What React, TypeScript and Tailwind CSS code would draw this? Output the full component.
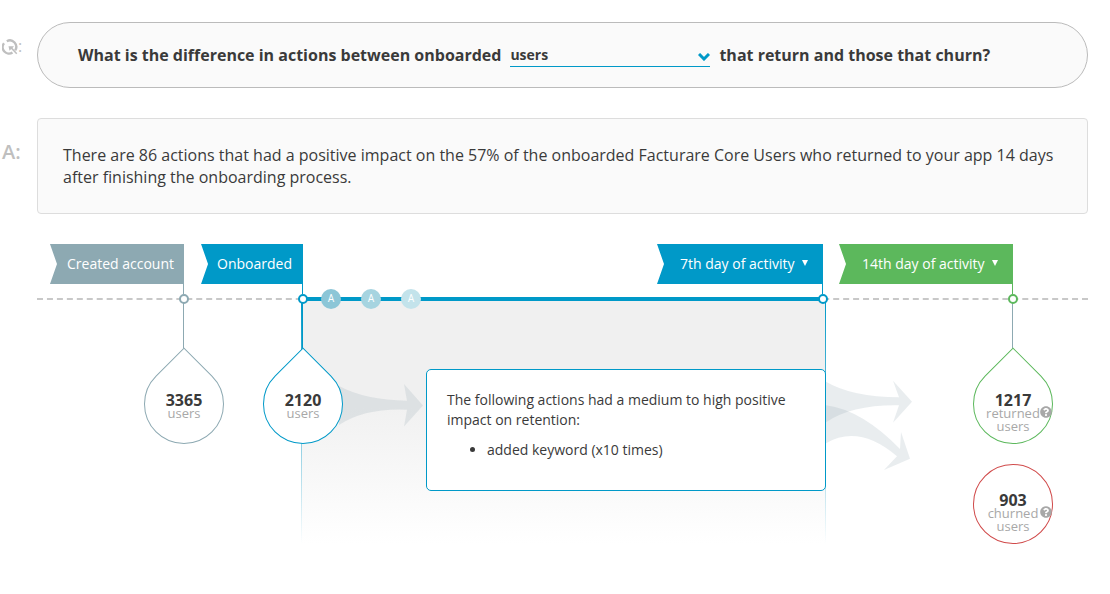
import React from "react";
import { FaQuestionCircle } from "react-icons/fa";

const NOTCH = "[clip-path:polygon(0_0,100%_0,100%_100%,0_100%,7px_50%)]";

interface FlagSelectProps {
  label: string;
  className: string;
}

// Flag with a day picker inside
const FlagSelect: React.FC<FlagSelectProps> = ({ label, className }) => (
  <div className={`relative h-10 text-white ${NOTCH} ${className}`}>
    <select
      aria-label="Day of activity"
      className="h-full w-full appearance-none bg-transparent pl-[23px] text-sm outline-none"
    >
      <option>{label}</option>
    </select>
    <svg viewBox="0 0 6 6" className="pointer-events-none absolute right-[15px] top-4 h-1.5 w-1.5" fill="currentColor">
      <path d="M0 0h6L3 6z" />
    </svg>
  </div>
);

// Short stem under a flag, ending in a ring on the rail
const RailMark: React.FC<{ className: string }> = ({ className }) => (
  <div className={`relative flex h-[30px] justify-end ${className}`}>
    <div className="h-2.5 w-px bg-current" />
    <div className="absolute -right-[5px] top-2.5 z-10 h-2.5 w-2.5 rounded-full border-2 border-current bg-white" />
  </div>
);

interface BubbleProps {
  count: number;
  lines: string[];
  help?: boolean;
  round?: boolean;
  className: string;
}

const Bubble: React.FC<BubbleProps> = ({ count, lines, help = false, round = false, className }) => (
  <div className="relative z-10 h-20 w-20 text-center">
    <div
      className={`absolute inset-0 rotate-45 rounded-full border bg-white ${round ? "" : "rounded-tl-none"} ${className}`}
    />
    <div className="relative pt-[29px]">
      <div className="text-base leading-[14px] font-bold text-[#3a3a3a]">{count}</div>
      {lines.map((line) => (
        <div key={line} className="text-[13px] leading-[13px] text-[#a8a8a8]">
          {line}
        </div>
      ))}
    </div>
    {help && <FaQuestionCircle className="absolute top-[42px] right-px h-3 w-3 text-[#a8a8a8]" />}
  </div>
);

const Stem: React.FC<{ className: string }> = ({ className }) => (
  <div className={`absolute right-0 top-0 h-12 w-px ${className}`} />
);

const ACTIONS = [
  { id: 1, color: "bg-[#8cc6d7]" },
  { id: 2, color: "bg-[#a6d4e0]" },
  { id: 3, color: "bg-[#c3e3eb]" },
];

const App: React.FC = () => {
  return (
    <main className="min-h-screen bg-white pt-[22px] pr-[22px] font-['Open_Sans','Noto_Sans',sans-serif] text-[#3a3a3a]">
      <section className="flex">
        <div className="flex w-[37px] shrink-0 items-start pt-4 pl-0.5 text-[#bfbfbf]">
          <svg viewBox="0 0 16 16" className="mt-px h-4 w-4" fill="none" stroke="currentColor" strokeWidth="2.4">
            <path d="M2 4.300A6.400 6.400 0 0 0 10.500 13.600M4.800 2.200A6.400 6.400 0 0 1 13.200 11.300" />
            <path d="M6.500 7.200h5.500l-1.500 1.700 4.800 5.400-1.100 1-5-5.200-1.700 1.700z" fill="currentColor" stroke="none" />
          </svg>
          <span className="text-base leading-4">:</span>
        </div>
        <div className="flex min-h-[66px] flex-1 items-center gap-[9px] rounded-[33px] border border-[#bbb] bg-[#fafafa] px-10 font-bold">
          <label htmlFor="segment">What is the difference in actions between onboarded</label>
          <div className="relative w-[200px] border-b border-[#0099c8]">
            <select
              id="segment"
              className="block h-[23px] w-full appearance-none bg-transparent text-sm font-bold outline-none"
            >
              <option>users</option>
            </select>
            <svg
              viewBox="0 0 12 8"
              className="pointer-events-none absolute right-0 top-2.5 h-2 w-3"
              fill="none"
              stroke="#0099c8"
              strokeWidth="3"
            >
              <path d="M1 1l5 5 5-5" />
            </svg>
          </div>
          <span>that return and those that churn?</span>
        </div>
      </section>

      <section className="mt-[30px] flex">
        <div className="w-[37px] shrink-0 pt-[22px] pl-0.5 text-xl leading-6 font-semibold text-[#bfbfbf]">A:</div>
        <p className="min-h-24 flex-1 rounded border border-[#ddd] bg-[#fafafa] p-[25px] text-base leading-[22px]">
          There are 86 actions that had a positive impact on the 57% of the onboarded Facturare Core Users who returned
          to your app 14 days after finishing the onboarding process.
        </p>
      </section>

      <section className="relative mt-[30px] ml-[37px] grid grid-cols-[147px_119px_1fr_190px_75px]">
        {/* flags */}
        <div className="flex justify-end">
          <div className={`h-10 bg-[#8da9b2] pr-2.5 pl-[17px] text-sm leading-10 text-white ${NOTCH}`}>
            Created account
          </div>
        </div>
        <div className="flex justify-end">
          <div className={`h-10 bg-[#0099c8] pr-[11px] pl-4 text-sm leading-10 text-white ${NOTCH}`}>Onboarded</div>
        </div>
        <div className="flex justify-end">
          <FlagSelect label="7th day of activity" className="w-[166px] bg-[#0099c8]" />
        </div>
        <div className="flex justify-end">
          <FlagSelect label="14th day of activity" className="w-[174px] bg-[#5cb85c]" />
        </div>
        <div />

        {/* rail */}
        <div className="absolute inset-x-0 top-[54px] border-t-2 border-dashed border-[#c8c8c8]" />
        <RailMark className="text-[#8da9b2]" />
        <RailMark className="text-[#0099c8]" />
        <div className="relative">
          <div className="absolute inset-x-0 top-[13px] z-[1] h-1 bg-[#0099c8]" />
          <div className="absolute top-[5px] left-[18px] z-10 flex gap-5">
            {ACTIONS.map((action) => (
              <span
                key={action.id}
                className={`h-5 w-5 rounded-full text-center font-[Roboto,sans-serif] text-[10px] leading-5 text-white ${action.color}`}
              >
                A
              </span>
            ))}
          </div>
          <RailMark className="text-[#0099c8]" />
        </div>
        <RailMark className="text-[#5cb85c]" />
        <div />

        {/* funnel */}
        <div className="relative -mt-3.5 flex justify-end pt-16">
          <Stem className="bg-[#8da9b2]" />
          <div className="-mr-10">
            <Bubble count={3365} lines={["users"]} className="border-[#8da9b2]" />
          </div>
        </div>
        <div className="relative z-[2] -mt-3.5 flex justify-end pt-16">
          <Stem className="bg-[#0099c8]" />
          <div className="-mr-10">
            <Bubble count={2120} lines={["users"]} className="border-[#0099c8]" />
          </div>
        </div>
        <div className="relative -mt-3.5 -mr-[3px] -ml-0.5 flex items-start bg-linear-to-b from-[#f0f0f0] from-40% to-white pt-[69px]">
          <div className="absolute inset-y-0 left-0 w-px bg-linear-to-b from-[#0099c8] to-transparent" />
          <div className="absolute inset-y-0 right-0 w-px bg-linear-to-b from-[#0099c8] to-transparent" />
          <div className="w-[125px] shrink-0 pt-[15px] pl-[38px]">
            <svg viewBox="0 0 84 43" className="h-[43px] w-[84px]" fill="#8fa3b0" fillOpacity="0.2">
              <path d="M0 2Q26 16 68 16.700L65 0L84 21.500L65 42.500L68 25.700Q26 24 0 41z" />
            </svg>
          </div>
          <div className="relative min-h-[122px] flex-1 rounded-[5px] border border-[#0099c8] bg-white px-5 pt-5 text-sm leading-5">
            <p>The following actions had a medium to high positive impact on retention:</p>
            <ul className="mt-2.5 list-disc pl-10">
              <li>added keyword (x10 times)</li>
            </ul>
          </div>
        </div>
        <div className="relative -mt-3.5 flex items-start justify-between pt-16 pl-[3px]">
          <Stem className="bg-[#8da9b2]" />
          <svg viewBox="0 0 87 90" className="mt-4 h-[90px] w-[87px]" fill="#8fa3b0" fillOpacity="0.2">
            <path d="M0 1.700Q26 17 73 17.300L67 .7L86 21.700L67 42.700L73 25.300Q26 24.500 0 42.300z" />
            <path d="M0 25.300Q36 30 74 69L75 52L84 78.700L58 90L71 76.300Q33 44 0 63.300z" />
          </svg>
          <div className="-mr-10 space-y-5">
            <Bubble count={1217} lines={["returned", "users"]} help className="border-[#5cb85c]" />
            <Bubble count={903} lines={["churned", "users"]} help round className="border-[#d04a4a]" />
          </div>
        </div>
        <div />
      </section>
    </main>
  );
};

export default App;
